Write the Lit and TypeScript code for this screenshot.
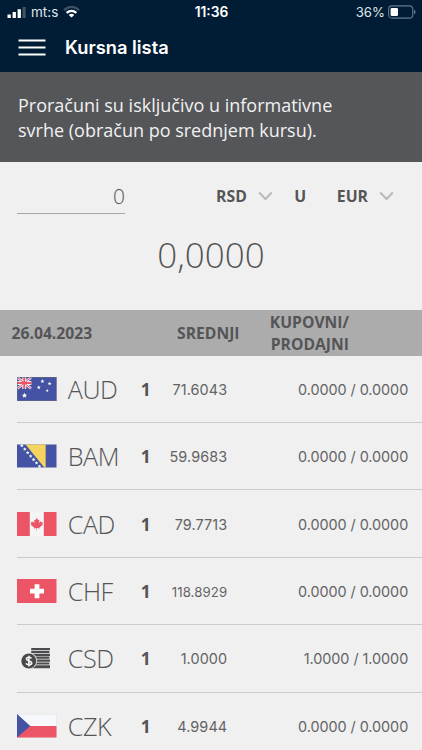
import { LitElement, html, svg, css, type TemplateResult } from "lit";
import { customElement, property } from "lit/decorators.js";

interface Rate {
  code: string;
  middle: string;
  pair: string;
}

const RATES: Rate[] = [
  { code: "AUD", middle: "71.6043", pair: "0.0000 / 0.0000" },
  { code: "BAM", middle: "59.9683", pair: "0.0000 / 0.0000" },
  { code: "CAD", middle: "79.7713", pair: "0.0000 / 0.0000" },
  { code: "CHF", middle: "118.8929", pair: "0.0000 / 0.0000" },
  { code: "CSD", middle: "1.0000", pair: "1.0000 / 1.0000" },
  { code: "CZK", middle: "4.9944", pair: "0.0000 / 0.0000" },
];

const STAR = "M0-2.6 .7-.9 2.5-.8 1.1.4 1.6 2.2 0 1.2-1.6 2.2-1.1.4-2.5-.8-.7-.9Z";

const star = (x: number, y: number, s: number) =>
  svg`<path d=${STAR} fill="#fff" transform="translate(${x} ${y}) scale(${s})" />`;

const FLAGS: Record<string, TemplateResult> = {
  AUD: svg`
    <rect width="39.5" height="24" fill="#4453a4" />
    <g stroke="#fff" stroke-opacity=".85">
      <path d="M.5 .5 14 11.5M14 .5 .5 11.5" stroke-width="2.6" />
      <path d="M7.2 0V12M0 6H14.4" stroke-width="4" />
    </g>
    <path d="M.5 .5 14 11.5M14 .5 .5 11.5" stroke="#ec5565" stroke-width="1" />
    <path d="M7.2 0V12M0 6H14.4" stroke="#ec5565" stroke-width="1.8" />
    ${star(25.4, 4.3, 0.8)} ${star(32.6, 6.6, 0.8)} ${star(21.8, 10.4, 0.8)}
    ${star(30.2, 13.6, 0.6)} ${star(7.5, 18.5, 1.05)}
    <rect x=".25" y=".25" width="39" height="23.5" fill="none" stroke="#6f6f78" stroke-width=".5" />`,
  BAM: svg`
    <rect y=".5" width="39.5" height="23" fill="#4453a4" />
    <path d="M8.5 .5H28.7V23.5H27.3Z" fill="#f4d35e" />
    ${[0, 1, 2, 3, 4, 5, 6].map((i) => star(4.8 + i * 2.95, 1.7 + i * 3.45, 0.75))}`,
  CAD: svg`
    <rect width="39.5" height="24" fill="#f5f5f7" />
    <path d="M0 0H12.8V24H0ZM26.8 0H39.5V24H26.8Z" fill="#ec5565" />
    <path d="M19.8 5.8 21.2 8.2 22.4 7.7 22 11 23.8 9.3 24.2 10.3 26 10 25.2 12 25.9 12.7 22.4 15.4 22.7 16.4 20 16.1V18.5H19.5V16.1L16.8 16.4 17.1 15.4 13.7 12.7 14.4 12 13.6 10 15.4 10.3 15.8 9.3 17.6 11 17.1 7.7 18.4 8.2Z" fill="#ec5565" />`,
  CHF: svg`
    <rect width="39.5" height="24" fill="#ec5565" />
    <path d="M17.6 5.3H22.4V9.8H27V14.6H22.4V19.2H17.6V14.6H13V9.8H17.6Z" fill="#fff" />`,
  CSD: svg`
    <path d="M14.2 1.9H33V4.1H14.2ZM14.2 4.8H32.4V7H14.2ZM14.2 7.7H33V9.9H14.2ZM14.2 10.6H32.4V12.8H14.2ZM14.2 13.5H33V15.7H14.2ZM14.2 16.4H32.4V18.6H14.2ZM14.2 19.3H33V22.2H14.2Z" fill="#4c4c4e" />
    <circle cx="11.8" cy="15" r="8.3" fill="#f0f0f0" />
    <circle cx="11.8" cy="15" r="7.5" fill="#48484a" />
    <path d="M14.5 12.5C13.8 10.8 9.5 10.8 9.4 13 9.4 15.4 14.7 14.5 14.7 17.1 14.5 19.4 9.7 19.3 9 17.3M11.9 9.8V20.4" fill="none" stroke="#f5f5f5" stroke-width="1.6" />`,
  CZK: svg`
    <rect x=".2" y=".2" width="39" height="23.3" fill="#f6f8fb" stroke="#dcdcdc" stroke-width=".5" />
    <path d="M0 12H39.5V23.5H0Z" fill="#ec5565" />
    <path d="M0 0 13.3 12 0 23.5Z" fill="#4453a4" />`,
};

@customElement("rate-row")
class RateRow extends LitElement {
  static styles = css`
    :host {
      display: block;
      height: 67.4px;
      padding-left: 17.3px;
    }
    .row {
      box-sizing: border-box;
      height: 100%;
      border-bottom: 1px solid #cbcbcb;
      display: grid;
      grid-template-columns: 39.5px 72px 33px 65.4px 181px;
      align-items: center;
      color: #555557;
    }
    .flag {
      display: block;
      width: 39.5px;
      height: 24px;
    }
    .code {
      padding-left: 11px;
      font: 300 25.2px/32px "Open Sans", sans-serif;
      letter-spacing: -0.5px;
    }
    .unit {
      padding-left: 12px;
      font: 700 17.5px/24px "Open Sans", sans-serif;
    }
    .middle,
    .pair {
      justify-self: end;
      white-space: nowrap;
      font: 400 14.4px/20px Inter, sans-serif;
      padding-top: 2px;
      color: #636365;
    }
    .middle {
      letter-spacing: 0.1px;
    }
    .pair {
      letter-spacing: -0.05px;
    }
    .small {
      font-size: 13.2px;
    }
  `;
  @property({ attribute: false }) rate!: Rate;
  render() {
    const { code, middle, pair } = this.rate;
    return html`<div class="row">
      <svg class="flag" viewBox="0 0 39.5 24">${FLAGS[code]}</svg>
      <span class="code">${code}</span>
      <span class="unit">1</span>
      <span class="middle ${middle.length > 7 ? "small" : ""}">${middle}</span>
      <span class="pair">${pair}</span>
    </div>`;
  }
}

@customElement("app-root")
class AppRoot extends LitElement {
  static styles = css`
    :host {
      display: block;
      height: 750px;
      overflow: hidden;
      background: #f0f0f0;
      color: #555557;
      font-family: "Open Sans", sans-serif;
    }
    svg {
      display: block;
    }
    .top {
      height: 72px;
      background: #011d35;
      color: #fff;
      font-family: Inter, sans-serif;
    }
    .status {
      height: 24px;
      display: grid;
      grid-template-columns: 1fr auto 1fr;
      align-items: center;
      padding: 0 6px 0 7px;
      font-size: 13.5px;
      line-height: 24px;
    }
    .left,
    .right {
      display: flex;
      align-items: center;
      color: #dfe5ea;
    }
    .left {
      gap: 5px;
    }
    .right {
      justify-content: flex-end;
      gap: 3px;
      font-size: 13.2px;
    }
    .clock {
      font-weight: 600;
      font-size: 13.8px;
    }
    .title {
      height: 46px;
      display: flex;
      align-items: center;
      gap: 19px;
      padding-left: 18px;
      font-size: 18.3px;
      font-weight: 600;
    }
    .note {
      box-sizing: border-box;
      height: 90px;
      padding: 21px 18px 0;
      background: #555659;
      color: #f1f1f1;
      font-size: 18px;
      line-height: 24.5px;
      white-space: nowrap;
    }
    .convert {
      height: 148px;
    }
    .fields {
      display: flex;
      align-items: center;
      height: 68px;
      font-size: 15.8px;
      font-weight: 700;
    }
    .amount {
      box-sizing: border-box;
      width: 108px;
      height: 35px;
      margin: 0 91px 0 17px;
      border-bottom: 1px solid #a8a8a8;
      text-align: right;
      font-size: 21px;
      font-weight: 300;
      line-height: 34px;
    }
    .from,
    .to {
      display: flex;
      align-items: center;
      gap: 11px;
    }
    .in {
      margin: 0 30.5px 0 21.5px;
    }
    .result {
      text-align: center;
      font-size: 35px;
      font-weight: 300;
      line-height: 50px;
    }
    .head {
      height: 45.6px;
      background: #acacac;
      display: grid;
      grid-template-columns: 177px 92px 80px;
      align-items: center;
      font-size: 15.7px;
      font-weight: 700;
      line-height: 21.2px;
    }
    .head span {
      padding-top: 1.6px;
    }
    .head .date {
      padding-left: 11.5px;
    }
    .both {
      text-align: right;
    }
  `;
  render() {
    const chevron = html`<svg width="15" height="10" viewBox="0 0 15 10">
      <path d="M1.2 1.5 7.5 8 13.8 1.5" fill="none" stroke="#b9b9ba" stroke-width="2" />
    </svg>`;
    return html`
      <header class="top">
        <div class="status">
          <div class="left">
            <svg width="19" height="11" viewBox="0 0 19 11">
              <path d="M.5 7.4h3.3V11H.5ZM5.6 5h3.3v6H5.6ZM10.6 2.2h3.3V11h-3.3Z" fill="#fff" />
              <rect x="15.5" width="3.2" height="11" fill="#3d5264" />
            </svg>
            <span>mt:s</span>
            <svg width="17" height="12" viewBox="0 0 17 12" fill="none">
              <path d="M1 4.1Q8.5-2.5 16 4.1" stroke="#3d5264" stroke-width="2.2" />
              <path d="M3.6 6.9Q8.5 2.7 13.4 6.9" stroke="#fff" stroke-width="2.2" />
              <path d="M5.8 8.9Q8.5 6.7 11.2 8.9L8.5 11.6Z" fill="#fff" />
            </svg>
          </div>
          <span class="clock">11:36</span>
          <div class="right">
            <span>36%</span>
            <svg width="28" height="14" viewBox="0 0 28 14">
              <rect x=".6" y=".9" width="24.2" height="12.2" rx="3.4" fill="none" stroke="#64788a" stroke-width="1.1" />
              <rect x="2.6" y="2.9" width="7.4" height="8.2" rx="1.3" fill="#fff" />
              <path d="M26 4.8q1.6.6 1.6 2.2T26 9.2Z" fill="#64788a" />
            </svg>
          </div>
        </div>
        <div class="title">
          <svg width="28" height="17" viewBox="0 0 28 17">
            <path d="M.5 1.6H27.5M.5 8.5H27.5M.5 15.4H27.5" stroke="#fff" stroke-width="2" />
          </svg>
          <span>Kursna lista</span>
        </div>
      </header>
      <div class="note">Proračuni su isključivo u informativne<br />svrhe (obračun po srednjem kursu).</div>
      <section class="convert">
        <div class="fields">
          <div class="amount">0</div>
          <div class="from"><span>RSD</span>${chevron}</div>
          <span class="in">U</span>
          <div class="to"><span>EUR</span>${chevron}</div>
        </div>
        <div class="result">0,0000</div>
      </section>
      <div class="head">
        <span class="date">26.04.2023</span><span>SREDNJI</span><span class="both">KUPOVNI/<br />PRODAJNI</span>
      </div>
      ${RATES.map((rate) => html`<rate-row .rate=${rate}></rate-row>`)}
    `;
  }
}
